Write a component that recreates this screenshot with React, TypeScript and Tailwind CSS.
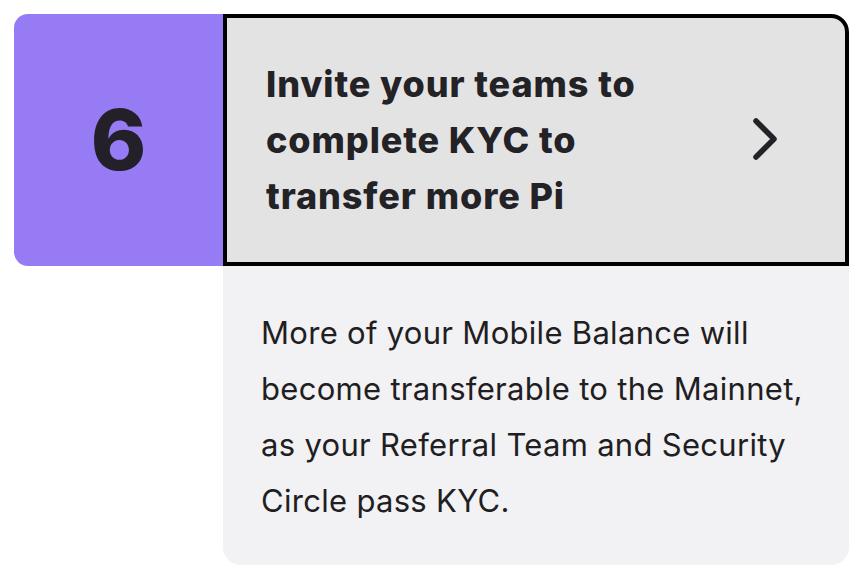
export default function App() {
  return (
    <div className="flex h-[584px] w-[864px] flex-col bg-white pl-[14px] pt-[14px] font-['Inter',sans-serif]">
      <div className="flex h-[252px] w-[835px]">
        {/* step number */}
        <div className="flex w-[209px] shrink-0 items-center justify-center rounded-l-[14px] bg-[#977bf5]">
          <span className="text-[84px] font-extrabold leading-none text-[#24202a]">6</span>
        </div>
        {/* title card */}
        <div className="flex flex-1 items-center justify-between rounded-tr-[18px] border-[4px] border-black bg-[#e4e3e4] pl-[39px] pr-[64px]">
          <h2 className="text-[36px] font-extrabold leading-[56px] tracking-[0.9px] text-[#232226]">
            Invite your teams to
            <br />
            complete KYC to
            <br />
            transfer more Pi
          </h2>
          <svg width="30" height="44" viewBox="0 0 30 44" fill="none" className="mb-[2px]">
            <path d="M5 4 L23 22 L5 40" stroke="#232226" strokeWidth="5.5" strokeLinecap="round" strokeLinejoin="round" />
          </svg>
        </div>
      </div>
      {/* description */}
      <div className="ml-[209px] h-[299px] w-[626px] rounded-b-[18px] bg-[#f2f1f3] pl-[38px] pt-[39px]">
        <p className="text-[31px] leading-[56px] tracking-[0.3px] text-[#1f1e22]">
          More of your Mobile Balance will
          <br />
          become transferable to the Mainnet,
          <br />
          as your Referral Team and Security
          <br />
          Circle pass KYC.
        </p>
      </div>
    </div>
  );
}
